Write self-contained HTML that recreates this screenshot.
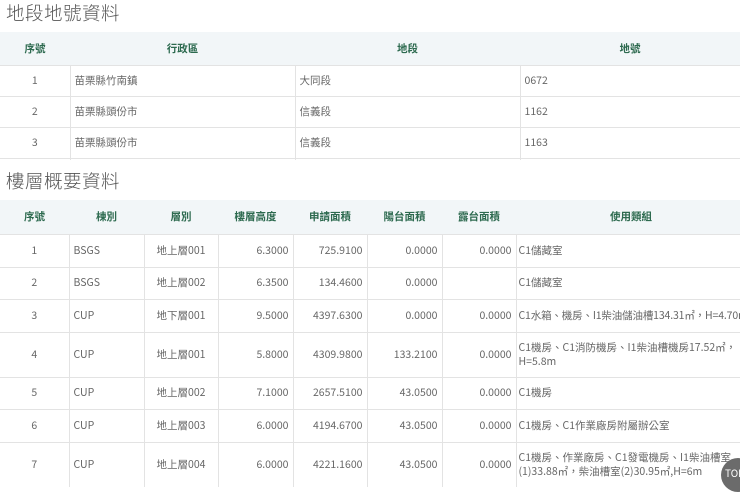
<!DOCTYPE html>
<html><head><meta charset="utf-8"><style>
body{margin:0;width:740px;height:478px;overflow:hidden;background:#fff;font-family:"Noto Sans CJK TC","Liberation Sans",sans-serif;color:#555;position:relative;}
h2{position:absolute;left:6px;margin:0;font-weight:300;font-size:18.5px;line-height:24px;color:#555;letter-spacing:0.5px;}
table{position:absolute;left:0;border-collapse:collapse;table-layout:fixed;font-size:10.5px;}
th{background:#f2f6f8;color:#2d6a4f;font-weight:bold;text-align:center;padding:0;}
td{border-top:1px solid #e3e3e3;border-left:1px solid #e3e3e3;padding:0 4px;line-height:14px;color:#666;}
td:first-child{border-left:none;text-align:center;}
td.u{padding-left:2px;padding-right:0;}
.r{text-align:right;}.c{text-align:center;}
.top{position:absolute;left:721px;top:458px;width:34px;height:34px;border-radius:50%;background:#6b6b6b;color:#fff;font-size:10px;line-height:30px;padding-left:4px;box-sizing:border-box;}
</style></head><body>
<h2 style="top:1px">地段地號資料</h2>
<table style="top:32px;width:740px">
<colgroup><col style="width:70px"><col style="width:225px"><col style="width:225px"><col style="width:220px"></colgroup>
<tr style="height:33px"><th>序號</th><th>行政區</th><th>地段</th><th>地號</th></tr>
<tr style="height:31px"><td>1</td><td>苗栗縣竹南鎮</td><td>大同段</td><td>0672</td></tr>
<tr style="height:31px"><td>2</td><td>苗栗縣頭份市</td><td>信義段</td><td>1162</td></tr>
<tr style="height:31px"><td>3</td><td>苗栗縣頭份市</td><td>信義段</td><td>1163</td></tr>
<tr style="height:1px"><td style="padding:0"></td><td style="padding:0"></td><td style="padding:0"></td><td style="padding:0"></td></tr>
</table>
<h2 style="top:169px">樓層概要資料</h2>
<table style="top:200px;width:746px">
<colgroup><col style="width:69px"><col style="width:75px"><col style="width:74px"><col style="width:75px"><col style="width:74px"><col style="width:75px"><col style="width:74px"><col style="width:230px"></colgroup>
<tr style="height:34px"><th>序號</th><th>棟別</th><th>層別</th><th>樓層高度</th><th>申請面積</th><th>陽台面積</th><th>露台面積</th><th>使用類組</th></tr>
<tr style="height:33px"><td>1</td><td>BSGS</td><td class="c">地上層001</td><td class="r">6.3000</td><td class="r">725.9100</td><td class="r">0.0000</td><td class="r">0.0000</td><td class="u">C1儲藏室</td></tr>
<tr style="height:32px"><td>2</td><td>BSGS</td><td class="c">地上層002</td><td class="r">6.3500</td><td class="r">134.4600</td><td class="r">0.0000</td><td class="r"></td><td class="u">C1儲藏室</td></tr>
<tr style="height:33px"><td>3</td><td>CUP</td><td class="c">地下層001</td><td class="r">9.5000</td><td class="r">4397.6300</td><td class="r">0.0000</td><td class="r">0.0000</td><td class="u" style="white-space:nowrap;letter-spacing:-0.15px">C1水箱、機房、I1柴油儲油槽134.31㎡，H=4.70m</td></tr>
<tr style="height:45px"><td>4</td><td>CUP</td><td class="c">地上層001</td><td class="r">5.8000</td><td class="r">4309.9800</td><td class="r">133.2100</td><td class="r">0.0000</td><td class="u">C1機房、C1消防機房、I1柴油槽機房17.52㎡，H=5.8m</td></tr>
<tr style="height:32px"><td>5</td><td>CUP</td><td class="c">地上層002</td><td class="r">7.1000</td><td class="r">2657.5100</td><td class="r">43.0500</td><td class="r">0.0000</td><td class="u">C1機房</td></tr>
<tr style="height:33px"><td>6</td><td>CUP</td><td class="c">地上層003</td><td class="r">6.0000</td><td class="r">4194.6700</td><td class="r">43.0500</td><td class="r">0.0000</td><td class="u">C1機房、C1作業廠房附屬辦公室</td></tr>
<tr style="height:45px"><td>7</td><td>CUP</td><td class="c">地上層004</td><td class="r">6.0000</td><td class="r">4221.1600</td><td class="r">43.0500</td><td class="r">0.0000</td><td class="u">C1機房、作業廠房、C1發電機房、I1柴油槽室(1)33.88㎡，柴油槽室(2)30.95㎡,H=6m</td></tr>
</table>
<div class="top">TOP</div>
</body></html>
